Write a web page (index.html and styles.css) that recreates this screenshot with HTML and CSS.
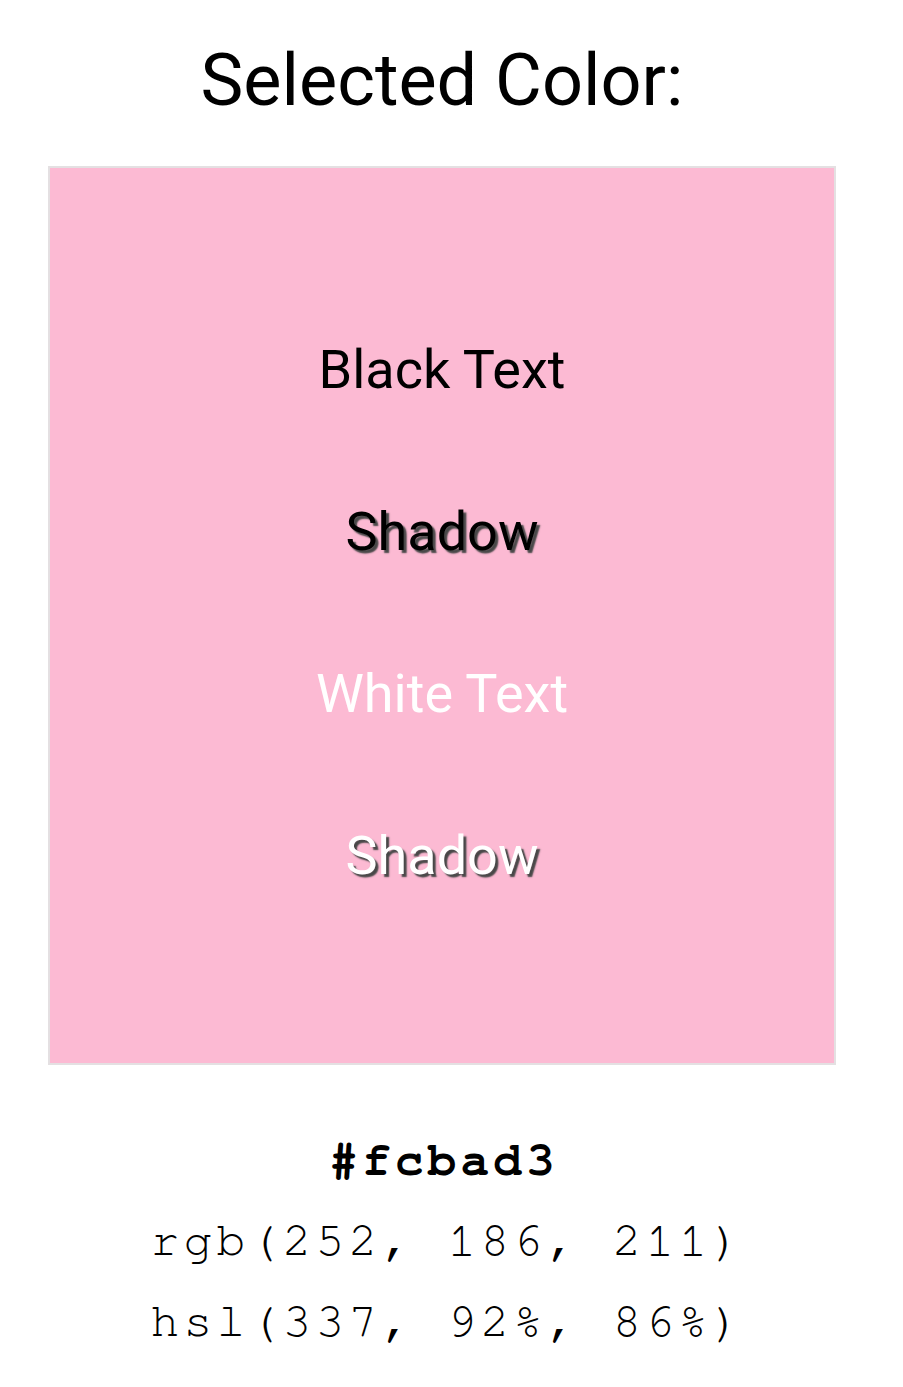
FILE: index.html
```html
<!DOCTYPE html>
<html>
<head>
<meta charset="utf-8">
<link rel="stylesheet" href="styles.css">
</head>
<body>
<div class="page">
  <h1 class="title">Selected Color:</h1>
  <div class="swatch">
    <div class="sample black">Black Text</div>
    <div class="sample black shadow">Shadow</div>
    <div class="sample white">White Text</div>
    <div class="sample white shadow">Shadow</div>
  </div>
  <div class="values">
    <div class="hex">#fcbad3</div>
    <div class="val">rgb(252, 186, 211)</div>
    <div class="val">hsl(337, 92%, 86%)</div>
  </div>
</div>
</body>
</html>
```
FILE: styles.css
```css
html, body {
  margin: 0;
  padding: 0;
  background: #ffffff;
}
.page {
  width: 884px;
  display: flex;
  flex-direction: column;
  align-items: center;
  font-family: Roboto, "Noto Sans", sans-serif;
}
.title {
  margin: 36px 0 0;
  font-weight: 400;
  font-size: 72px;
  line-height: 90px;
  color: #000;
}
.swatch {
  box-sizing: border-box;
  margin-top: 40px;
  width: 788px;
  height: 899px;
  padding-bottom: 6px;
  background: #fcbad3;
  border: 2px solid #e4e0e2;
  display: flex;
  flex-direction: column;
  justify-content: center;
  align-items: center;
  gap: 102px;
}
.sample {
  font-size: 54px;
  line-height: 60px;
}
.black { color: #000; }
.white { color: #fff; }
.shadow { text-shadow: 3px 3px 1.5px #474747; }
.values {
  margin-top: 56px;
  display: flex;
  flex-direction: column;
  align-items: center;
  font-family: "Nimbus Mono PS", "Nimbus Mono L", FreeMono, Courier, "Liberation Mono", monospace;
  color: #000;
}
.hex {
  font-weight: 700;
  font-size: 48px;
  line-height: 80px;
  letter-spacing: 4px;
  padding-left: 4px;
}
.val {
  font-size: 48px;
  line-height: 81px;
  letter-spacing: 4.2px;
  padding-left: 11px;
}
```
